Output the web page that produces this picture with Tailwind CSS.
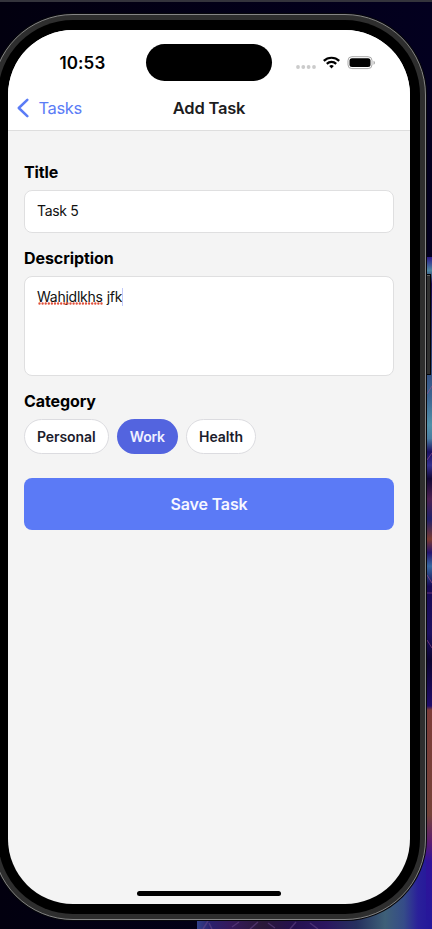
<!DOCTYPE html>
<html lang="en">
<head>
<meta charset="utf-8">
<title>Add Task</title>
<script src="https://cdn.jsdelivr.net/npm/@tailwindcss/browser@4"></script>
</head>
<body class="relative h-[929px] w-[432px] overflow-hidden bg-[#02000f] font-['Inter','Liberation_Sans',sans-serif]">
  <!-- desktop wallpaper -->
  <svg class="absolute inset-0" width="432" height="929" viewBox="0 0 432 929">
    <defs>
      <linearGradient id="sky" x1="0" x2="1" y1="0" y2="0"><stop offset="0" stop-color="#02000f"/><stop offset="1" stop-color="#03001f"/></linearGradient>
      <linearGradient id="side" x1="0" x2="0" y1="257" y2="929" gradientUnits="userSpaceOnUse">
        <stop offset="0" stop-color="#2b1a8a"/><stop offset=".02" stop-color="#4d86a0"/><stop offset=".04" stop-color="#180a50"/>
        <stop offset=".21" stop-color="#3d6692"/><stop offset=".25" stop-color="#5090a8"/><stop offset=".27" stop-color="#497da0"/><stop offset=".29" stop-color="#1b1060"/>
        <stop offset=".31" stop-color="#34308c"/><stop offset=".33" stop-color="#120835"/><stop offset=".36" stop-color="#4b2050"/><stop offset=".39" stop-color="#20206a"/>
        <stop offset=".42" stop-color="#7a3a30"/><stop offset=".44" stop-color="#25146e"/><stop offset=".46" stop-color="#3668a0"/><stop offset=".49" stop-color="#170a55"/>
        <stop offset=".56" stop-color="#1d1060"/><stop offset=".6" stop-color="#0c0430"/><stop offset=".668" stop-color="#200c6a"/><stop offset=".674" stop-color="#7c3c38"/>
        <stop offset=".83" stop-color="#744238"/><stop offset=".87" stop-color="#5c1c70"/><stop offset=".9" stop-color="#30129a"/><stop offset="1" stop-color="#24189a"/>
      </linearGradient>
      <linearGradient id="foot" x1="197" x2="432" y1="0" y2="0" gradientUnits="userSpaceOnUse">
        <stop offset="0" stop-color="#32408a"/><stop offset=".06" stop-color="#2a206c"/><stop offset=".14" stop-color="#35195c"/><stop offset=".28" stop-color="#2a1838"/>
        <stop offset=".42" stop-color="#251050"/><stop offset=".55" stop-color="#2b1660"/><stop offset=".68" stop-color="#26305e"/><stop offset=".8" stop-color="#3e6078"/>
        <stop offset=".88" stop-color="#354c88"/><stop offset=".94" stop-color="#2a209a"/><stop offset="1" stop-color="#24169a"/>
      </linearGradient>
    </defs>
    <rect width="432" height="929" fill="url(#sky)"/>
    <rect x="424" y="257" width="8" height="672" fill="url(#side)"/>
    <rect x="197" y="860" width="235" height="69" fill="url(#foot)"/>
    <path d="M426 780h6v140h-6z" fill="url(#side)"/>
    <path d="M427 394l5-8M427 460l5-7M427 575l5 8M427 593h5M427 640l5 8" stroke="#a0508c" opacity=".6"/>
    <path d="M203 929l5-8M212 929l-3-6M232 927l7-5M250 929l8-7M268 923l7 5M290 929l6-7M310 923l8 6" stroke="#6a4a8c" opacity=".5" stroke-width="1.5"/>
    <rect width="432" height="2" fill="#34343c"/>
    <rect x="426" y="274.500" width="4.500" height="100" fill="#303030" stroke="#050505"/>
    <path d="M426 275.500h4" stroke="#626262"/>
  </svg>

  <!-- phone body -->
  <div class="absolute -left-2 top-[14px] h-[906px] w-[434px] rounded-[81px] border border-[#858585] bg-[#2e2e2e] p-[5px] shadow-[0_0_0_1px_#08080c]">
    <div class="h-full w-full rounded-[75px] bg-black p-[10px]">
      <main class="flex h-[874px] w-[402px] flex-col overflow-hidden rounded-[65px] bg-[#f4f4f4]">
        <header class="h-[101px] shrink-0 border-b border-[#dedede] bg-white">
          <div class="flex h-[56px] pt-[14px]">
            <div class="w-[138px] pl-[51.500px] pt-[6.500px] text-[17px] font-semibold leading-[24px] tracking-[0.1px] text-black">10:53</div>
            <div class="h-[37px] w-[126px] rounded-full bg-black"></div>
            <svg class="ml-[22px] mt-[10px]" width="84" height="20" viewBox="0 0 84 20">
              <g fill="#cbcbcb"><circle cx="4" cy="13" r="1.900"/><circle cx="9.300" cy="13" r="1.900"/><circle cx="14.600" cy="13" r="1.900"/><circle cx="20" cy="13" r="1.900"/></g>
              <g fill="none" stroke="#000" stroke-width="2.200"><path d="M29.800 6.900a11 11 0 0 1 15.400 0"/><path d="M32.800 9.900a6.700 6.700 0 0 1 9.400 0"/></g>
              <path d="M35.200 12.100a3.350 3.350 0 0 1 4.600 0L37.500 14.600z" fill="#000"/>
              <rect x="54" y="2.700" width="24" height="11.900" rx="3.800" fill="none" stroke="#a9a9a9"/>
              <rect x="55.500" y="4.200" width="21" height="8.900" rx="2.500" fill="#000"/>
              <path d="M79.500 6.700q1.500.6 1.500 2t-1.500 2z" fill="#a9a9a9"/>
            </svg>
          </div>
          <nav class="grid h-[44px] grid-cols-[1fr_auto_1fr] items-center text-[17px]">
            <a class="flex items-center gap-[9.500px] pl-[9px] text-[#5b7cf6]">
              <svg width="12" height="20" viewBox="0 0 12 20" fill="none" stroke="currentColor" stroke-width="2.500" stroke-linecap="round" stroke-linejoin="round"><path d="M10.300 1.800L1.800 10l8.500 8.200"/></svg>
              <span class="text-[16.500px] tracking-[-0.350px]">Tasks</span>
            </a>
            <h1 class="text-[16.500px] font-semibold tracking-[-0.220px] text-[#1c1c1e]">Add Task</h1>
          </nav>
        </header>
        <form class="flex flex-1 flex-col px-4 pt-[31px]">
          <label class="text-[16px] font-bold leading-5 tracking-[-0.100px] text-black">Title</label>
          <div class="mt-2 flex h-[43px] items-center rounded-lg border border-[#dfdfe0] bg-white px-3 pb-0.5 text-[14px] tracking-[-0.350px] text-[#111]">Task 5</div>
          <label class="mt-[15px] text-[16px] font-bold leading-5 tracking-[-0.080px] text-black">Description</label>
          <div class="mt-2 flex h-[100px] rounded-lg border border-[#dfdfe0] bg-white px-3 pt-[10px] text-[14px] leading-5 text-[#111]">
            <span class="relative h-5 tracking-[-0.250px]">Wahjdlkhs<svg class="absolute left-0 top-[14px]" width="66" height="5"><path d="M2.500 2.500H65" stroke="#e0513c" stroke-width="2.400" stroke-linecap="round" stroke-dasharray="0 3.100"/></svg></span>
            <span class="ml-1 tracking-[-0.250px]">jfk</span>
            <i class="mt-px h-[18px] w-px bg-[#c3cbfa]"></i>
          </div>
          <label class="mt-[15px] text-[16px] font-bold leading-5 tracking-[-0.100px] text-black">Category</label>
          <div class="mt-2 flex gap-2 text-[14px] font-semibold tracking-[-0.080px] text-[#1c1c2c]">
            <span class="flex h-[35px] w-[84.500px] items-center justify-center rounded-full border border-[#dcdce0] bg-white">Personal</span>
            <span class="flex h-[35px] w-[61.500px] items-center justify-center rounded-full bg-[#5364df] tracking-[-0.250px] text-[#f0f1ff]">Work</span>
            <span class="flex h-[35px] w-[70px] items-center justify-center rounded-full border border-[#dcdce0] bg-white">Health</span>
          </div>
          <button type="button" class="mt-[24px] h-[52px] rounded-lg bg-[#5b7af6] text-[16px] font-semibold tracking-[-0.150px] text-[#f6f7ff]">Save Task</button>
        </form>
        <div class="mx-auto mb-2 h-[5px] w-[144px] rounded-full bg-black"></div>
      </main>
    </div>
  </div>
</body>
</html>
